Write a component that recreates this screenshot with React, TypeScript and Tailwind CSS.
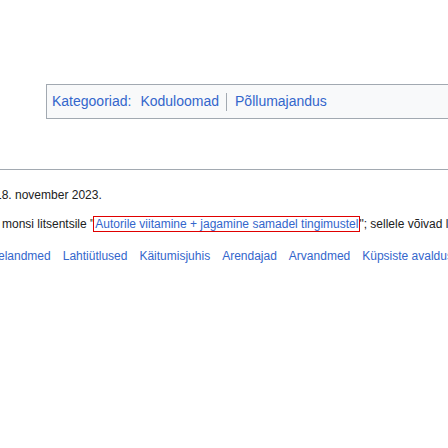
const footerLinks = [
  "elandmed",
  "Lahtiütlused",
  "Käitumisjuhis",
  "Arendajad",
  "Arvandmed",
  "Küpsiste avaldus",
];

export default function App() {
  return (
    <div
      className="w-[448px] h-[448px] overflow-hidden bg-white text-[#202122]"
      style={{ fontFamily: '"Liberation Sans", Arial, sans-serif' }}
    >
      <div className="pt-[84px]">
        {/* category links */}
        <div className="ml-[46px] w-[500px] h-[35px] flex items-center pl-[5px] border border-r-0 border-[#a2a9b1] bg-[#f8f9fa] text-[14px] text-[#36c] whitespace-nowrap">
          <a className="mr-[9px]">Kategooriad:</a>
          <a className="pr-[7px]">Koduloomad</a>
          <span className="h-[18px] border-l border-[#a2a9b1]" />
          <a className="pl-[8px]">Põllumajandus</a>
        </div>

        {/* footer */}
        <div className="mt-[50px] border-t border-[#a2a9b1] text-[12px] leading-[17px] whitespace-nowrap">
          <div className="mt-[17px] ml-[-5px]">18. november 2023.</div>
          <div className="mt-[12px] ml-[2px]">
            monsi litsentsile "
            <span className="outline outline-1 outline-[#e00000] text-[#36c] px-[1px]">
              Autorile viitamine + jagamine samadel tingimustel
            </span>
            "; sellele võivad lisanduda täiendavad tingimused.
          </div>
          <div className="mt-[15px] ml-[-2px] flex gap-x-[12px] text-[#36c]">
            {footerLinks.map((l, i) => (
              <a key={i}>{l}</a>
            ))}
          </div>
        </div>
      </div>
    </div>
  );
}
